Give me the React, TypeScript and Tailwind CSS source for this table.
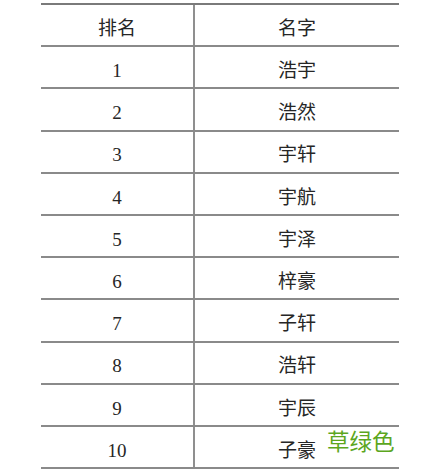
import React from "react";

const rows = [
  ["1", "浩宇"],
  ["2", "浩然"],
  ["3", "宇轩"],
  ["4", "宇航"],
  ["5", "宇泽"],
  ["6", "梓豪"],
  ["7", "子轩"],
  ["8", "浩轩"],
  ["9", "宇辰"],
  ["10", "子豪"],
];

function Row({ a, b }: { a: string; b: string }) {
  return (
    <div className="flex h-[42.2px] border-b-2 border-[#8a8a8a]">
      <div className="w-[154px] border-r-2 border-[#8f8f8f] flex items-center justify-center pt-[8px]">{a}</div>
      <div className="flex-1 flex items-center justify-center pt-[8px]">{b}</div>
    </div>
  );
}

export default function App() {
  return (
    <div
      className="relative w-[445px] h-[476px] bg-white text-[#262626] text-[19px]"
      style={{ fontFamily: '"Liberation Serif", "Noto Sans CJK SC", serif' }}
    >
      <div className="ml-[41px] pt-[3px] w-[358px]">
        <div className="border-t-2 border-[#7a7a7a]">
          <Row a="排名" b="名字" />
          {rows.map(([a, b]) => (
            <Row key={a} a={a} b={b} />
          ))}
        </div>
      </div>
      <div
        className="absolute left-[327px] top-[429px] text-[22.5px] text-[#5ca61e] leading-none"
        style={{ fontFamily: '"Noto Sans CJK SC", sans-serif' }}
      >
        草绿色
      </div>
    </div>
  );
}
